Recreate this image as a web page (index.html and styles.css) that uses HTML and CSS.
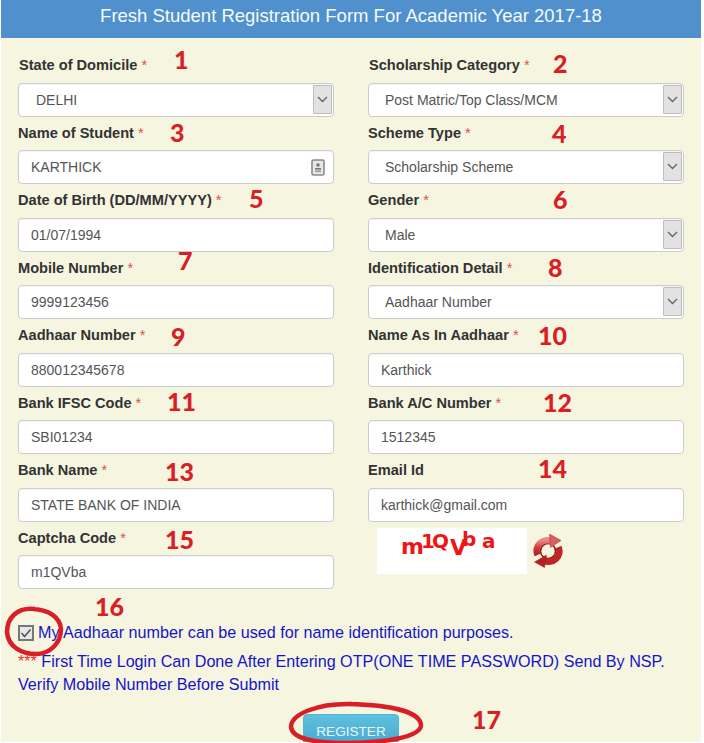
FILE: index.html
```html
<!DOCTYPE html>
<html lang="en">
<head>
<meta charset="utf-8">
<title>Fresh Student Registration</title>
<link rel="stylesheet" href="styles.css">
</head>
<body>
<main class="panel">
  <h1 class="panel-title">Fresh Student Registration Form For Academic Year 2017-18</h1>
  <form class="panel-body">
    <div class="grid">
      <div class="field"><label class="label label-in">State of Domicile <i>*</i></label>
        <div class="select"><span class="value value-s1">DELHI</span><span class="arrow"><svg width="11" height="7" viewBox="0 0 11 7"><path d="M1 1l4.500 4.500L10 1" fill="none" stroke="#666" stroke-width="1.400"/></svg></span></div></div>
      <div class="field"><label class="label label-in">Scholarship Category <i>*</i></label>
        <div class="select"><span class="value value-s">Post Matric/Top Class/MCM</span><span class="arrow"><svg width="11" height="7" viewBox="0 0 11 7"><path d="M1 1l4.500 4.500L10 1" fill="none" stroke="#666" stroke-width="1.400"/></svg></span></div></div>
      <div class="field"><label class="label">Name of Student <i>*</i></label>
        <div class="select"><span class="value">KARTHICK</span><svg class="contact" width="14" height="17" viewBox="0 0 14 17"><rect x="1" y="1" width="12" height="15" rx="1.500" fill="#e6e6e6" stroke="#8a8a8a" stroke-width="1.600"/><circle cx="7" cy="6" r="1.800" fill="#777"/><rect x="4" y="9" width="6" height="1.600" fill="#777"/><rect x="4" y="11.400" width="6" height="1.600" fill="#999"/></svg></div></div>
      <div class="field"><label class="label">Scheme Type <i>*</i></label>
        <div class="select"><span class="value value-s">Scholarship Scheme</span><span class="arrow"><svg width="11" height="7" viewBox="0 0 11 7"><path d="M1 1l4.500 4.500L10 1" fill="none" stroke="#666" stroke-width="1.400"/></svg></span></div></div>
      <div class="field"><label class="label">Date of Birth (DD/MM/YYYY) <i>*</i></label>
        <div class="select"><span class="value">01/07/1994</span></div></div>
      <div class="field"><label class="label">Gender <i>*</i></label>
        <div class="select"><span class="value value-s">Male</span><span class="arrow"><svg width="11" height="7" viewBox="0 0 11 7"><path d="M1 1l4.500 4.500L10 1" fill="none" stroke="#666" stroke-width="1.400"/></svg></span></div></div>
      <div class="field"><label class="label">Mobile Number <i>*</i></label>
        <div class="select"><span class="value">9999123456</span></div></div>
      <div class="field"><label class="label">Identification Detail <i>*</i></label>
        <div class="select"><span class="value value-s">Aadhaar Number</span><span class="arrow"><svg width="11" height="7" viewBox="0 0 11 7"><path d="M1 1l4.500 4.500L10 1" fill="none" stroke="#666" stroke-width="1.400"/></svg></span></div></div>
      <div class="field"><label class="label">Aadhaar Number <i>*</i></label>
        <div class="select"><span class="value">880012345678</span></div></div>
      <div class="field"><label class="label">Name As In Aadhaar <i>*</i></label>
        <div class="select"><span class="value">Karthick</span></div></div>
      <div class="field"><label class="label">Bank IFSC Code <i>*</i></label>
        <div class="select"><span class="value">SBI01234</span></div></div>
      <div class="field"><label class="label">Bank A/C Number <i>*</i></label>
        <div class="select"><span class="value">1512345</span></div></div>
      <div class="field"><label class="label">Bank Name <i>*</i></label>
        <div class="select"><span class="value">STATE BANK OF INDIA</span></div></div>
      <div class="field"><label class="label">Email Id</label>
        <div class="select"><span class="value">karthick@gmail.com</span></div></div>
      <div class="field"><label class="label">Captcha Code <i>*</i></label>
        <div class="select"><span class="value">m1QVba</span></div></div>
      <div class="captcha-field">
        <div class="captcha">
          <span class="cc c1">m</span><span class="cc c2">1</span><span class="cc c3">Q</span><span class="cc c4">V</span><span class="cc c5">b</span><span class="cc c6">a</span>
        </div>
        <svg class="refresh" width="30" height="34" viewBox="0 0 30 34">
          <defs>
            <linearGradient id="rg" x1="0" y1="0" x2="0" y2="1"><stop offset="0" stop-color="#e98a8a"/><stop offset=".5" stop-color="#d23b3b"/><stop offset="1" stop-color="#b02020"/></linearGradient>
          </defs>
          <circle cx="15" cy="17" r="7.500" fill="none" stroke="#8f1414" stroke-width="1.500"/>
          <path d="M4.500 21A10.500 10.500 0 0 1 19 7.500" fill="none" stroke="url(#rg)" stroke-width="6.500"/>
          <path d="M25.500 13A10.500 10.500 0 0 1 11 26.500" fill="none" stroke="#bd2626" stroke-width="6.500"/>
          <path d="M16.500 0L28 6.500 17.500 13.500z" fill="#d96060" stroke="#a82a2a" stroke-width=".5"/>
          <path d="M1.500 28L11.500 33.500 13.500 21z" fill="#b52020" stroke="#932020" stroke-width=".5"/>
        </svg>
      </div>
    </div>
    <p class="consent"><svg class="check" width="16" height="16" viewBox="0 0 16 16"><rect x="1" y="1" width="14" height="14" fill="#e8e8e8" stroke="#777" stroke-width="2"/><path d="M3.500 8l3 3.500 6-7" fill="none" stroke="#555" stroke-width="1.600"/></svg><span class="consent-text">My Aadhaar number can be used for name identification purposes.</span></p>
    <p class="note"><span class="stars">***</span> First Time Login Can Done After Entering OTP(ONE TIME PASSWORD) Send By NSP.<br>Verify Mobile Number Before Submit</p>
    <div class="actions"><button class="register" type="button">REGISTER</button></div>
  </form>
</main>
<div class="annotations">
  <svg class="ring" width="704" height="743" viewBox="0 0 704 743">
    <path d="M35 609C17 607 7 618 7 632C8 647 22 654 36 654C50 654 61 643 61 629C60 617 49 610 33 609" fill="none" stroke="#d81f26" stroke-width="4.500"/>
    <path d="M352 704C318 703 291 714 291 727C292 738 313 743 345 743C385 743 421 737 421 725C420 712 392 705 348 704" fill="none" stroke="#d81f26" stroke-width="4.500"/>
  </svg>
  <span class="num n1">1</span><span class="num n2">2</span><span class="num n3">3</span><span class="num n4">4</span><span class="num n5">5</span><span class="num n6">6</span><span class="num n7">7</span><span class="num n8">8</span><span class="num n9">9</span><span class="num n10">10</span><span class="num n11">11</span><span class="num n12">12</span><span class="num n13">13</span><span class="num n14">14</span><span class="num n15">15</span><span class="num n16">16</span><span class="num n17">17</span>
</div>
</body>
</html>
```
FILE: styles.css
```css
* { box-sizing: border-box; }
html, body { margin: 0; padding: 0; background: #fff; }
body {
  position: relative;
  width: 704px;
  height: 743px;
  overflow: hidden;
  font-family: "Liberation Sans", Arial, sans-serif;
}
.panel {
  width: 700px;
  height: 742px;
  margin-left: 1px;
  background: #f6f5e0;
  overflow: hidden;
}
.panel-title {
  margin: 0;
  height: 38px;
  background: #4f90cd;
  color: #f7fafd;
  font-size: 18.500px;
  font-weight: 400;
  line-height: 31px;
  text-align: center;
}
.panel-body { padding: 11.400px 17px 0; }
.grid {
  display: grid;
  grid-template-columns: 316px 316px;
  column-gap: 34px;
  grid-auto-rows: 67.500px;
}
.field { display: flex; flex-direction: column; }
.label {
  height: 33.500px;
  line-height: 33.500px;
  color: #333;
  font-size: 14.600px;
  font-weight: 700;
}
.label-in { padding-left: 1px; }
.label i { color: #d9534f; font-style: normal; font-weight: 400; }
.select {
  position: relative;
  display: flex;
  align-items: center;
  height: 34px;
  padding-left: 12px;
  background: #fff;
  border: 1px solid #ccc;
  border-radius: 4px;
  box-shadow: inset 0 1px 1px rgba(0,0,0,.04);
  color: #555;
  font-size: 14px;
}
.value-s { padding-left: 4px; }
.value-s1 { padding-left: 5px; }
.arrow {
  position: absolute;
  top: 1px;
  right: 1px;
  bottom: 2px;
  width: 19px;
  display: flex;
  align-items: center;
  justify-content: center;
  background: #e2e2e2;
  border: 1px solid #bdbdbd;
  border-radius: 1px;
}
.contact { position: absolute; right: 8px; top: 8px; }
.captcha-field { display: flex; align-items: flex-start; padding: 6px 0 0 9px; }
.captcha {
  position: relative;
  width: 150px;
  height: 46px;
  background: #fff;
}
.cc {
  position: absolute;
  color: #f01414;
  font-family: "DejaVu Sans", sans-serif;
  font-weight: 700;
  line-height: 1;
}
.c1 { left: 24px; top: 8px; font-size: 22px; }
.c2 { left: 44px; top: 3px; font-size: 20px; }
.c3 { left: 55px; top: 3px; font-size: 20px; }
.c4 { left: 73px; top: 9px; font-size: 22px; }
.c5 { left: 85px; top: 1px; font-size: 20px; }
.c6 { left: 105px; top: 3px; font-size: 20px; }
.refresh { margin: 6px 0 0 6px; }
.consent {
  display: flex;
  align-items: center;
  gap: 4px;
  margin: 0;
  padding-top: 26px;
  height: 60.900px;
  color: #1414c8;
  font-size: 16.150px;
}
.note {
  margin: 0;
  color: #1414c8;
  font-size: 16.150px;
  line-height: 23px;
}
.stars { color: #e33; }
.actions { display: flex; justify-content: center; margin-top: 18px; }
.register {
  width: 96px;
  height: 40px;
  padding: 0 0 6px;
  border: 1px solid #46b8da;
  border-radius: 4px;
  background: linear-gradient(#5fc0de, #3fa4cc);
  color: #e8f6fb;
  font-family: inherit;
  font-size: 13.600px;
}
.annotations { position: absolute; inset: 0; pointer-events: none; }
.ring { position: absolute; left: 0; top: 0; }
.num {
  position: absolute;
  color: #d81f26;
  font-family: Lato, sans-serif;
  font-size: 25px;
  font-weight: 900;
  line-height: 1;
}
.n1 { left: 174px; top: 47px; }
.n2 { left: 553px; top: 51px; }
.n3 { left: 170px; top: 120px; }
.n4 { left: 552px; top: 121px; }
.n5 { left: 249px; top: 186px; }
.n6 { left: 553px; top: 187px; }
.n7 { left: 178px; top: 248px; }
.n8 { left: 548px; top: 255px; }
.n9 { left: 171px; top: 324px; }
.n10 { left: 538px; top: 323px; }
.n11 { left: 167px; top: 389px; }
.n12 { left: 543px; top: 390px; }
.n13 { left: 165px; top: 459px; }
.n14 { left: 538px; top: 456px; }
.n15 { left: 165px; top: 527px; }
.n16 { left: 95px; top: 594px; }
.n17 { left: 472px; top: 707px; }
```
